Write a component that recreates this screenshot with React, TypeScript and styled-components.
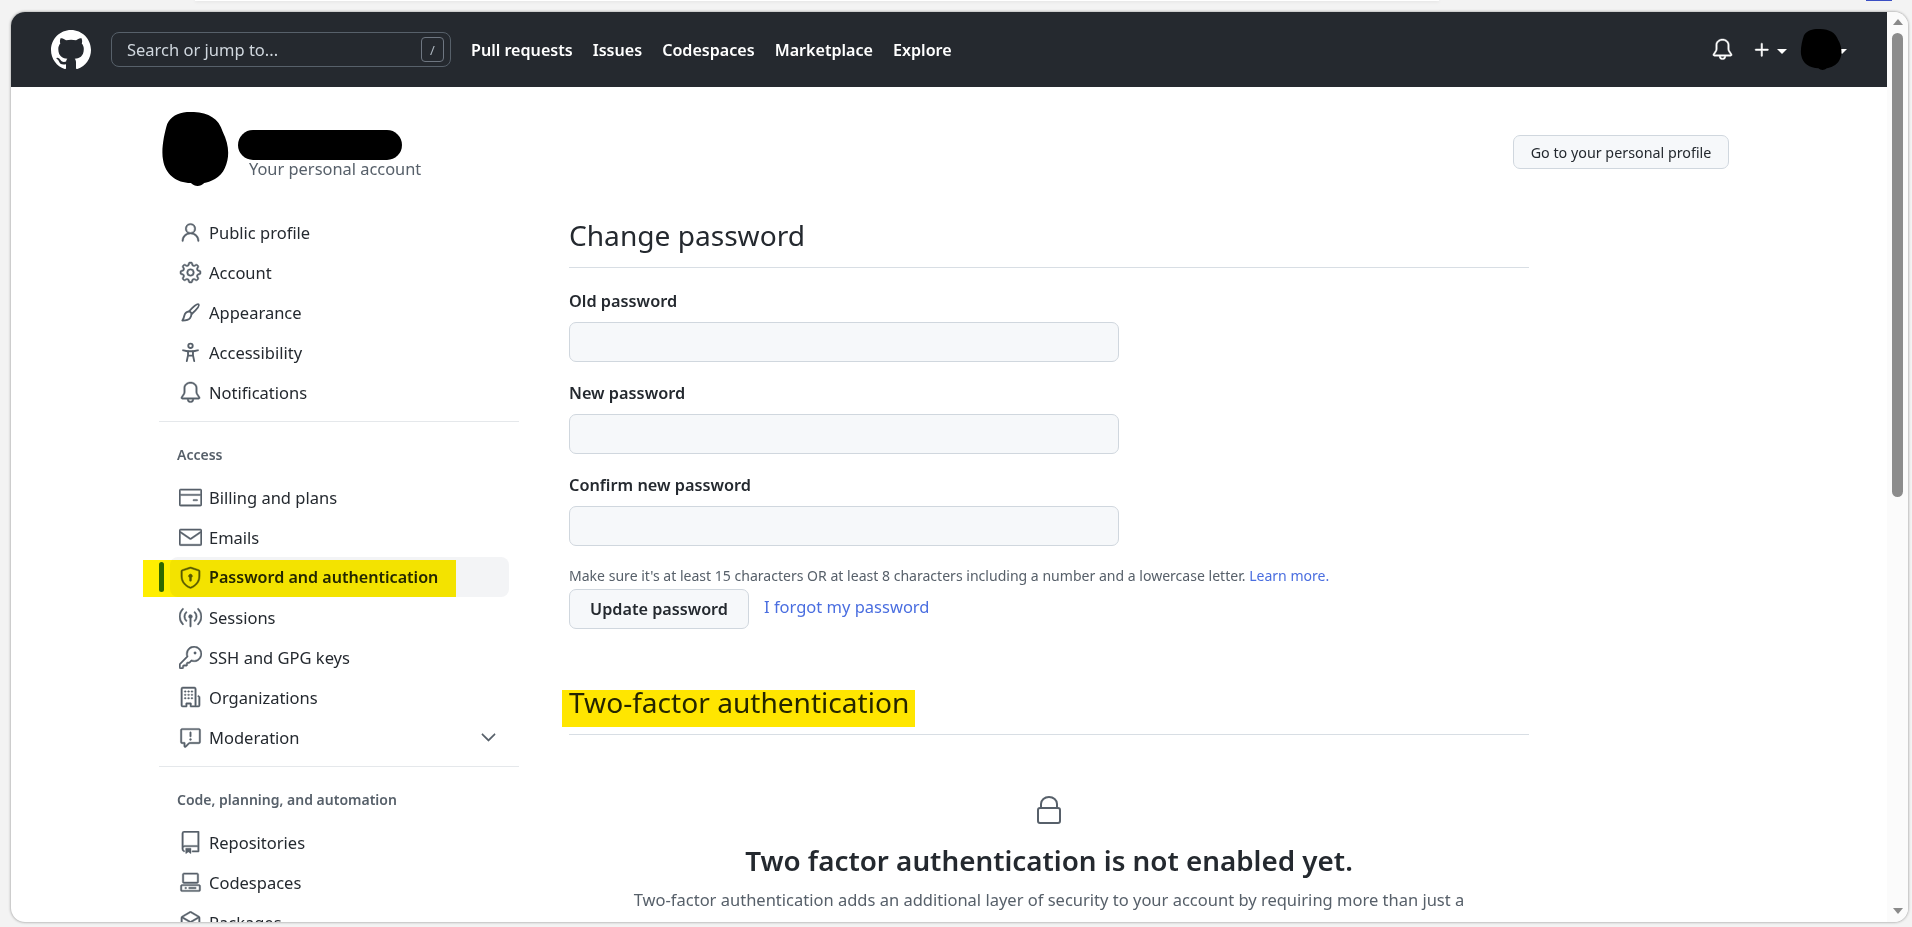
import styled, { createGlobalStyle } from "styled-components";
import {
  GoBell,
  GoBroadcast,
  GoChevronDown,
  GoCodespaces,
  GoCreditCard,
  GoGear,
  GoKey,
  GoMail,
  GoOrganization,
  GoPackage,
  GoPerson,
  GoPlus,
  GoReport,
  GoRepo,
  GoShieldLock,
} from "react-icons/go";

const GlobalStyle = createGlobalStyle`
  html, body {
    margin: 0;
    height: 100%;
    overflow: hidden;
    background: #f3f3f3;
    font-family: "Noto Sans", "Open Sans", sans-serif;
    color: #24292f;
  }
`;

const Frame = styled.div`
  box-sizing: border-box;
  height: 927px;
  padding: 0 4px 5px 11px;
  display: flex;
  flex-direction: column;
`;

const TopEdge = styled.div`
  height: 12px;
  flex: none;
  margin-left: -11px;
  margin-right: -4px;
  display: flex;
  align-items: flex-start;
`;

const EdgeSheet = styled.span`
  width: 1244px;
  height: 1px;
  margin-left: 195px;
  background: #fff;
  box-shadow: 0 1px 3px rgba(0, 0, 0, 0.12);
`;

const EdgeBadge = styled.span`
  width: 26px;
  height: 1px;
  margin-left: 427px;
  background: #3b4fc4;
`;

const Window = styled.div`
  flex: 1;
  min-height: 0;
  display: flex;
  border-radius: 14px;
  overflow: hidden;
  background: #fff;
  box-shadow: 0 0 3px rgba(0, 0, 0, 0.45);
`;

const Page = styled.div`
  flex: 1;
  min-width: 0;
  overflow: hidden;
`;

const ScrollTrack = styled.div`
  width: 21px;
  flex: none;
  display: flex;
  flex-direction: column;
  align-items: center;
  padding: 7px 0 8px;
  box-sizing: border-box;
  background: #fbfbfb;
`;

const ScrollArrow = styled.div<{ $down?: boolean }>`
  width: 0;
  height: 0;
  border-left: 5px solid transparent;
  border-right: 5px solid transparent;
  ${(p) =>
    p.$down
      ? "border-top: 6px solid #8a8a8a; margin-top: auto;"
      : "border-bottom: 6px solid #8a8a8a;"}
`;

const ScrollThumb = styled.div`
  width: 11px;
  height: 464px;
  margin-top: 8px;
  border-radius: 6px;
  background: #8c8c8c;
`;

const Header = styled.header`
  height: 75px;
  display: flex;
  align-items: center;
  padding: 0 40px;
  background: #25292f;
  color: #fff;
`;

const LogoMark = styled.svg`
  width: 40px;
  height: 40px;
  flex: none;
`;

const Search = styled.div`
  box-sizing: border-box;
  width: 340px;
  height: 35px;
  margin-left: 20px;
  padding: 0 6px 0 15px;
  display: flex;
  align-items: center;
  justify-content: space-between;
  border: 1px solid #57606a;
  border-radius: 8px;
  font-size: 16.5px;
  color: #d0d7de;
`;

const SlashKey = styled.span`
  box-sizing: border-box;
  width: 23px;
  height: 25px;
  display: flex;
  align-items: center;
  justify-content: center;
  border: 1px solid #6e7681;
  border-radius: 4px;
  font-size: 13px;
  color: #afb8c1;
`;

const TopNav = styled.nav`
  display: flex;
  gap: 20px;
  margin-left: 20px;
`;

const TopLink = styled.a`
  font-size: 16.1px;
  font-weight: 600;
  color: #fff;
`;

const HeaderRight = styled.div`
  margin-left: auto;
  display: flex;
  align-items: center;
`;

const BellIcon = styled(GoBell)`
  width: 23px;
  height: 23px;
  margin: 0 -1.5px;
  stroke: currentColor;
  stroke-width: 0.45;
`;

const PlusIcon = styled(GoPlus)`
  width: 22px;
  height: 22px;
  margin: 0 -1px 0 19px;
  stroke: currentColor;
  stroke-width: 0.6;
`;

const Caret = styled.span<{ $tucked?: boolean }>`
  width: 0;
  height: 0;
  margin-top: 3px;
  margin-left: ${(p) => (p.$tucked ? "-5px" : "5px")};
  border-left: 5px solid transparent;
  border-right: 5px solid transparent;
  border-top: 5px solid #fff;
`;

const HeaderAvatar = styled.svg`
  width: 42px;
  height: 41px;
  margin-left: 13px;
  position: relative;
  z-index: 1;
`;

const Content = styled.main`
  padding: 25px 158px 0 148px;
`;

const ProfileBar = styled.div`
  display: flex;
  justify-content: space-between;
  align-items: flex-start;
  margin-bottom: 26px;
`;

const ProfileInfo = styled.div`
  display: flex;
  align-items: flex-start;
`;

const ProfileAvatar = styled.svg`
  width: 68px;
  height: 74px;
  margin-left: 2px;
  flex: none;
`;

const ProfileText = styled.div`
  margin: 18px 0 0 20px;
`;

const NameMask = styled.div`
  width: 164px;
  height: 30px;
  margin-left: -11px;
  border-radius: 15px;
  background: #000;
`;

const ProfileSub = styled.div`
  margin-top: -3px;
  font-size: 16.4px;
  line-height: 24px;
  color: #57606a;
`;

const ProfileButton = styled.button`
  box-sizing: border-box;
  width: 216px;
  height: 34px;
  margin-top: 23px;
  padding: 0;
  border: 1px solid #d0d7de;
  border-radius: 7px;
  background: #f6f8fa;
  font: 400 14.3px "Noto Sans", sans-serif;
  color: #24292f;
`;

const Layout = styled.div`
  display: flex;
  gap: 50px;
`;

const Sidebar = styled.aside`
  width: 360px;
  flex: none;
`;

const NavRow = styled.a<{ $active?: boolean }>`
  position: relative;
  box-sizing: border-box;
  height: 40px;
  margin: 0 10px 0 11px;
  padding-left: 10px;
  display: flex;
  align-items: center;
  gap: 9px;
  border-radius: 8px;
  font-size: ${(p) => (p.$active ? "16.1px" : "16.5px")};
  font-weight: ${(p) => (p.$active ? 600 : 400)};
  background: ${(p) => (p.$active ? "#f3f4f6" : "transparent")};

  svg {
    width: 23px;
    height: 23px;
    margin: 0 -1.5px;
    flex: none;
    color: #57606a;
    stroke: currentColor;
    stroke-width: 0.45;
  }
`;

const RowChevron = styled.span`
  margin-left: auto;
  margin-right: 11px;
  display: flex;
`;

const ActiveBar = styled.span`
  position: absolute;
  left: -11px;
  top: 5px;
  width: 5px;
  height: 30px;
  border-radius: 3px;
  background: #2f6fda;
`;

const RowHighlight = styled.span`
  position: absolute;
  left: -27px;
  top: 3px;
  width: 313px;
  height: 37px;
  background: #ffee00;
  mix-blend-mode: multiply;
`;

const Divider = styled.div`
  height: 1px;
  margin-top: 9px;
  background: #e5e8eb;
`;

const GroupHeading = styled.div<{ $top: number; $bottom: number }>`
  margin: ${(p) => p.$top}px 0 ${(p) => p.$bottom}px 18px;
  font-size: 14px;
  font-weight: 600;
  line-height: 20px;
  color: #57606a;
`;

const Main = styled.section`
  width: 960px;
  flex: none;
  padding-top: 4px;
`;

const SectionTitle = styled.h2`
  position: relative;
  margin: 0;
  padding-bottom: 13px;
  border-bottom: 1px solid #d8dee4;
  font-size: 28.1px;
  font-weight: 400;
  line-height: 38px;
`;

const TitleHighlight = styled.span`
  position: absolute;
  left: -7px;
  top: 7px;
  width: 353px;
  height: 37px;
  background: #ffe600;
  mix-blend-mode: multiply;
`;

const Form = styled.form`
  padding-top: 22px;
`;

const FieldLabel = styled.label`
  display: block;
  font-size: 16.3px;
  font-weight: 600;
  line-height: 22px;
`;

const PasswordInput = styled.input`
  display: block;
  box-sizing: border-box;
  width: 550px;
  height: 40px;
  margin: 10px 0 20px;
  border: 1px solid #d0d7de;
  border-radius: 7px;
  background: #f6f8fa;
`;

const Note = styled.p`
  margin: 0;
  font-size: 14.06px;
  line-height: 20px;
  color: #57606a;
`;

const BlueLink = styled.a`
  color: #4a6ee0;
`;

const FormActions = styled.div`
  display: flex;
  align-items: flex-start;
  gap: 15px;
  margin-top: 3px;
`;

const SubmitButton = styled.button`
  box-sizing: border-box;
  width: 180px;
  height: 40px;
  padding: 0;
  border: 1px solid #d0d7de;
  border-radius: 7px;
  background: #f6f8fa;
  font: 600 16.2px "Noto Sans", sans-serif;
  color: #24292f;
`;

const ForgotLink = styled(BlueLink)`
  margin-top: 5px;
  font-size: 16.5px;
  line-height: 25px;
`;

const SecondBlock = styled.div`
  margin-top: 54px;
`;

const EmptyState = styled.div`
  padding-top: 61px;
  display: flex;
  flex-direction: column;
  align-items: center;
  text-align: center;
`;

const LockMark = styled.svg`
  width: 24px;
  height: 28px;
  flex: none;
`;

const EmptyTitle = styled.h3`
  margin: 15px 0 5px;
  font-size: 27.8px;
  font-weight: 600;
  line-height: 42px;
`;

const EmptyText = styled.p`
  max-width: 875px;
  margin: 0;
  font-size: 16.5px;
  line-height: 28px;
  color: #57606a;
`;

const blob =
  "M32 0C46 1 56 6 60 20C66 32 67 45 62 56C58 66 47 70 42 71C38 75 33 75 29 71C15 71 4 62 2 48C0 38 3 22 6 12C10 3 20-1 32 0Z";

function GithubMark() {
  return (
    <LogoMark viewBox="0 0 16 16" fill="currentColor">
      <path d="M8 0C3.58 0 0 3.58 0 8c0 3.54 2.29 6.53 5.47 7.59.4.07.55-.17.55-.38 0-.19-.01-.82-.01-1.49-2.01.37-2.53-.49-2.69-.94-.09-.23-.48-.94-.82-1.13-.28-.15-.68-.52-.01-.53.63-.01 1.08.58 1.23.82.72 1.21 1.87.87 2.33.66.07-.52.28-.87.51-1.07-1.78-.2-3.64-.89-3.64-3.95 0-.87.31-1.59.82-2.15-.08-.2-.36-1.02.08-2.12 0 0 .67-.21 2.2.82.64-.18 1.32-.27 2-.27.68 0 1.36.09 2 .27 1.53-1.04 2.2-.82 2.2-.82.44 1.1.16 1.92.08 2.12.51.56.82 1.27.82 2.15 0 3.07-1.87 3.75-3.65 3.95.29.25.54.73.54 1.48 0 1.07-.01 1.93-.01 2.2 0 .21.15.46.55.38A8.013 8.013 0 0016 8c0-4.42-3.58-8-8-8z" />
    </LogoMark>
  );
}

function LockIcon() {
  return (
    <LockMark viewBox="0 0 24 28" fill="none" stroke="#57606a" strokeWidth="2">
      <rect x="1" y="12" width="22" height="15" rx="2" />
      <path d="M4 12V8a8 7 0 0 1 16 0v4" />
    </LockMark>
  );
}

function BrushIcon() {
  return (
    <svg viewBox="-1.3 -1.3 18.6 18.6">
      <g fill="none" strokeWidth="1.5" strokeLinejoin="round">
        <path d="M14.6 1.4c-1-.9-4 1.5-7.6 5.4l2.2 2.2c3.9-3.6 6.3-6.6 5.4-7.6z" />
        <path d="M6.8 7.2C4.5 7.4 3.4 8.8 3 10.6c-.3 1.4-.8 2.6-1.6 3.9 3 0 5.2-.4 6.3-2 .8-1.1 1.1-2.2 1-3.4" />
      </g>
    </svg>
  );
}

function AccessibilityIcon() {
  return (
    <svg viewBox="-1.3 -1.3 18.6 18.6">
      <g fill="none" strokeWidth="1.5" strokeLinecap="round">
        <circle cx="8" cy="2.6" r="1.8" />
        <path d="M2 6.2c1.5.4 2.9.8 3.8.8h4.4c.9 0 2.3-.4 3.8-.8" />
        <path d="M6 7v3.2L5 15M10 7v3.2L11 15M6 10.5h4" />
      </g>
    </svg>
  );
}

type NavItem = {
  label: string;
  icon: React.ComponentType;
  active?: boolean;
  expandable?: boolean;
};

const personalNav: NavItem[] = [
  { label: "Public profile", icon: GoPerson },
  { label: "Account", icon: GoGear },
  { label: "Appearance", icon: BrushIcon },
  { label: "Accessibility", icon: AccessibilityIcon },
  { label: "Notifications", icon: GoBell },
];

const accessNav: NavItem[] = [
  { label: "Billing and plans", icon: GoCreditCard },
  { label: "Emails", icon: GoMail },
  { label: "Password and authentication", icon: GoShieldLock, active: true },
  { label: "Sessions", icon: GoBroadcast },
  { label: "SSH and GPG keys", icon: GoKey },
  { label: "Organizations", icon: GoOrganization },
  { label: "Moderation", icon: GoReport, expandable: true },
];

const codeNav: NavItem[] = [
  { label: "Repositories", icon: GoRepo },
  { label: "Codespaces", icon: GoCodespaces },
  { label: "Packages", icon: GoPackage },
];

function NavGroup({ items }: { items: NavItem[] }) {
  return (
    <>
      {items.map(({ label, icon: Icon, active, expandable }) => (
        <NavRow key={label} $active={active}>
          {active && <ActiveBar />}
          <Icon />
          {label}
          {expandable && (
            <RowChevron>
              <GoChevronDown />
            </RowChevron>
          )}
          {active && <RowHighlight />}
        </NavRow>
      ))}
    </>
  );
}

export default function App() {
  return (
    <>
      <GlobalStyle />
      <Frame>
        <TopEdge>
          <EdgeSheet />
          <EdgeBadge />
        </TopEdge>
        <Window>
          <Page>
            <Header>
              <GithubMark />
              <Search>
                Search or jump to...
                <SlashKey>/</SlashKey>
              </Search>
              <TopNav>
                <TopLink>Pull requests</TopLink>
                <TopLink>Issues</TopLink>
                <TopLink>Codespaces</TopLink>
                <TopLink>Marketplace</TopLink>
                <TopLink>Explore</TopLink>
              </TopNav>
              <HeaderRight>
                <BellIcon />
                <PlusIcon />
                <Caret />
                <HeaderAvatar viewBox="0 0 66 74" preserveAspectRatio="none">
                  <path d={blob} fill="#000" />
                </HeaderAvatar>
                <Caret $tucked />
              </HeaderRight>
            </Header>
            <Content>
              <ProfileBar>
                <ProfileInfo>
                  <ProfileAvatar viewBox="0 0 66 74" preserveAspectRatio="none">
                    <path d={blob} fill="#000" />
                  </ProfileAvatar>
                  <ProfileText>
                    <NameMask />
                    <ProfileSub>Your personal account</ProfileSub>
                  </ProfileText>
                </ProfileInfo>
                <ProfileButton>Go to your personal profile</ProfileButton>
              </ProfileBar>
              <Layout>
                <Sidebar>
                  <NavGroup items={personalNav} />
                  <Divider />
                  <GroupHeading $top={23} $bottom={12}>
                    Access
                  </GroupHeading>
                  <NavGroup items={accessNav} />
                  <Divider />
                  <GroupHeading $top={23} $bottom={12}>
                    Code, planning, and automation
                  </GroupHeading>
                  <NavGroup items={codeNav} />
                </Sidebar>
                <Main>
                  <SectionTitle>Change password</SectionTitle>
                  <Form>
                    <FieldLabel>Old password</FieldLabel>
                    <PasswordInput type="password" />
                    <FieldLabel>New password</FieldLabel>
                    <PasswordInput type="password" />
                    <FieldLabel>Confirm new password</FieldLabel>
                    <PasswordInput type="password" />
                    <Note>
                      Make sure it's at least 15 characters OR at least 8 characters including a
                      number and a lowercase letter. <BlueLink>Learn more.</BlueLink>
                    </Note>
                    <FormActions>
                      <SubmitButton type="button">Update password</SubmitButton>
                      <ForgotLink>I forgot my password</ForgotLink>
                    </FormActions>
                  </Form>
                  <SecondBlock>
                    <SectionTitle>
                      Two-factor authentication
                      <TitleHighlight />
                    </SectionTitle>
                    <EmptyState>
                      <LockIcon />
                      <EmptyTitle>Two factor authentication is not enabled yet.</EmptyTitle>
                      <EmptyText>
                        Two-factor authentication adds an additional layer of security to your
                        account by requiring more than just a password to sign in.
                      </EmptyText>
                    </EmptyState>
                  </SecondBlock>
                </Main>
              </Layout>
            </Content>
          </Page>
          <ScrollTrack>
            <ScrollArrow />
            <ScrollThumb />
            <ScrollArrow $down />
          </ScrollTrack>
        </Window>
      </Frame>
    </>
  );
}
